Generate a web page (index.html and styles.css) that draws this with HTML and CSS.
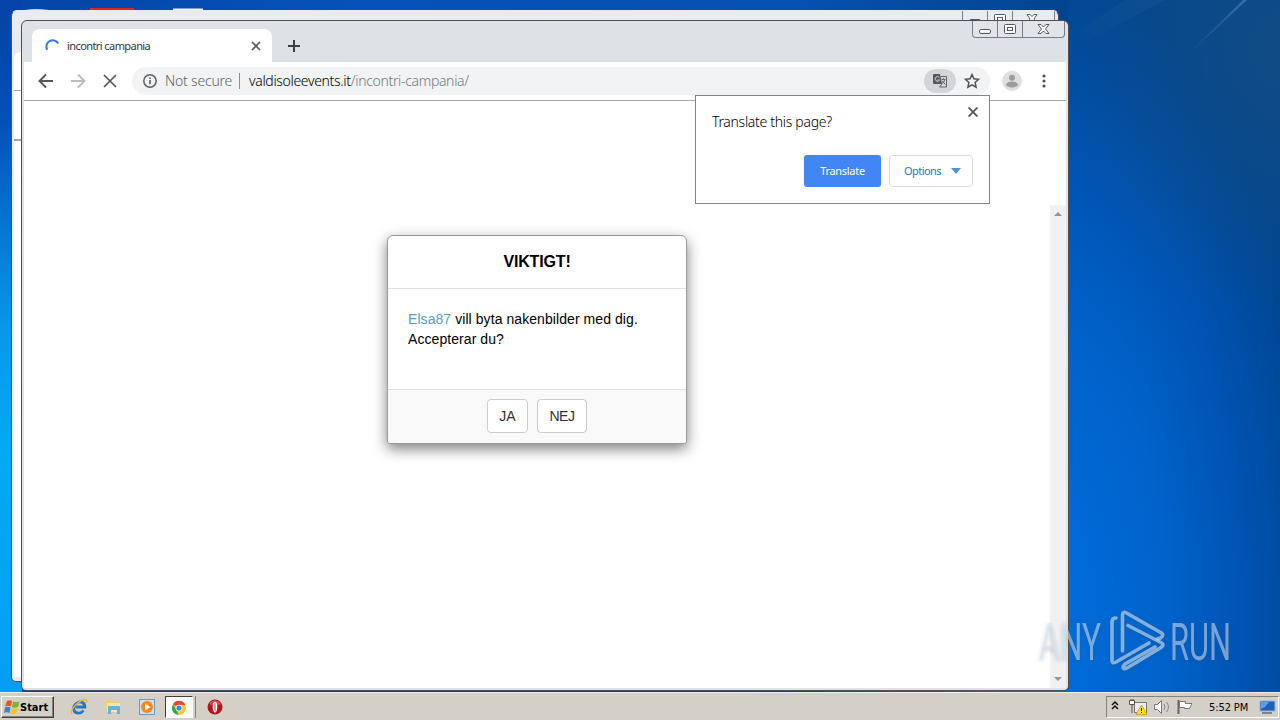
FILE: index.html
```html
<!DOCTYPE html>
<html lang="en">
<head>
<meta charset="utf-8">
<title>incontri campania</title>
<link rel="stylesheet" href="styles.css">
</head>
<body>
<div class="desktop">
  <svg class="rays" width="1280" height="692" viewBox="0 0 1280 692">
    <defs><linearGradient id="ray" x1="1" y1="0" x2="0" y2="1"><stop offset="0" stop-color="#8ac2e8" stop-opacity=".3"/><stop offset="1" stop-color="#8ac2e8" stop-opacity="0"/></linearGradient></defs>
    <path d="M1243 0h4L1180 62Z" fill="url(#ray)"/>
    <path d="M1125 0h40L1070 50V36Z" fill="url(#ray)" opacity=".2"/>
    <path d="M25 10q10-2 24 0z" fill="#cfd8df"/><path d="M90 8h44v3H90z" fill="#d52b1e"/><path d="M173 8.500h30v2.500h-30z" fill="#eef3f8"/>
  </svg>

  <div class="window back">
    <div class="controls"><i></i><i></i><i></i>
      <svg width="85" height="17" viewBox="0 0 85 17" fill="#fff" stroke="#555a66"><rect x="6.500" y="8.500" width="11" height="4" rx="1.500"/><rect x="31.500" y="3.500" width="11" height="9" rx="1"/><rect x="34.500" y="6.500" width="5" height="3"/><path d="M64 3.500h3l2 2 2-2h3l-3 4.500 3 4.500h-3l-2-2-2 2h-3l3-4.500z"/></svg>
    </div>
    <div class="back-tabs"></div>
    <div class="back-line"></div>
    <div class="back-mark"></div>
  </div>

  <div class="window front">
    <div class="controls"><i></i><i></i><i></i>
      <svg width="92" height="17" viewBox="0 0 92 17" fill="#fff" stroke="#555a66"><rect x="6.500" y="8.500" width="11" height="4" rx="1.500"/><rect x="31.500" y="3.500" width="11" height="9" rx="1"/><rect x="34.500" y="6.500" width="5" height="3"/><path d="M65 3.500h3l2.500 2.500L73 3.500h3L72.500 8l3.500 4.500h-3L70.500 10 68 12.500h-3L68.500 8z"/></svg>
    </div>
    <div class="tabstrip">
      <div class="tab">
        <svg class="spinner" width="16" height="16" viewBox="0 0 16 16"><path d="M3.200 12.800A6.300 6.300 0 0 1 14.200 6.500" fill="none" stroke="#3b78e0" stroke-width="2"/></svg>
        <span class="tab-title">incontri campania</span>
        <svg width="10" height="10" viewBox="0 0 10 10"><path d="M1 1l8 8M9 1l-8 8" stroke="#555960" stroke-width="1.700"/></svg>
      </div>
      <svg class="newtab" width="12" height="12" viewBox="0 0 12 12"><path d="M6 0v12M0 6h12" stroke="#3c4043" stroke-width="2"/></svg>
    </div>
    <div class="toolbar">
      <svg class="nav" width="96" height="16" viewBox="0 0 96 16" fill="none" stroke="#54575b" stroke-width="1.900"><path d="M15 8H2M8 1.500L1.500 8 8 14.500"/><path d="M33 8h13M40 1.500L46.500 8 40 14.500" stroke="#b9bbbe"/><path d="M66 2l12 12M78 2L66 14" stroke-width="1.700"/></svg>
      <div class="omnibox">
        <svg width="16" height="16" viewBox="0 0 16 16"><circle cx="8" cy="8" r="6.200" fill="none" stroke="#5f6368" stroke-width="1.500"/><path d="M8 7v4.300M8 4.400v1.700" stroke="#5f6368" stroke-width="1.700"/></svg>
        <span class="secure">Not secure</span><span class="divider"></span>
        <span class="url"><b>valdisoleevents.it</b>/incontri-campania/</span>
        <span class="translate-chip"><svg width="16" height="16" viewBox="0 0 16 16"><path d="M2 1h6l2 10H2a1 1 0 0 1-1-1V2a1 1 0 0 1 1-1z" fill="#55585c"/><path d="M7.300 4.500A2.300 2.300 0 1 0 7.500 7H5.500" fill="none" stroke="#d0d2d5"/><path d="M8.500 3.500h6v10.500H7.500L10 11M9.500 6.500h4M11.500 5.200v1.300M12.800 6.500q-.5 3-3 4M10.200 8l3.300 3.500" fill="none" stroke="#62656a"/></svg></span>
        <svg class="star" width="16" height="16" viewBox="0 0 16 16"><path d="M8 1.500l1.900 4.300 4.700.5-3.500 3.200 1 4.700L8 11.800l-4.100 2.400 1-4.700L1.400 6.300l4.700-.5z" fill="none" stroke="#505358" stroke-width="1.500"/></svg>
      </div>
      <svg class="avatar" width="20" height="20" viewBox="0 0 20 20"><circle cx="10" cy="10" r="10" fill="#dedfe1"/><circle cx="10" cy="6.700" r="3" fill="#9b9da0"/><ellipse cx="10" cy="13.500" rx="6" ry="3" fill="#9b9da0"/></svg>
      <svg class="more" width="4" height="16" viewBox="0 0 4 16" fill="#505358"><circle cx="2" cy="3" r="1.600"/><circle cx="2" cy="8" r="1.600"/><circle cx="2" cy="13" r="1.600"/></svg>
    </div>
    <div class="page">
      <div class="scrollbar"><svg width="8" height="4" viewBox="0 0 8 4"><path d="M0 4l4-4 4 4z" fill="#969696"/></svg><svg width="8" height="4" viewBox="0 0 8 4"><path d="M0 0l4 4 4-4z" fill="#969696"/></svg></div>
    </div>
  </div>

  <div class="dialog">
    <div class="dialog-head">VIKTIGT!</div>
    <div class="dialog-body"><span class="name">Elsa87</span> vill byta nakenbilder med dig.<br>Accepterar du?</div>
    <div class="dialog-foot"><span class="choice ja">JA</span><span class="choice nej">NEJ</span></div>
  </div>

  <div class="translate">
    <div class="translate-head"><span>Translate this page?</span><svg width="10" height="10" viewBox="0 0 10 10"><path d="M.5.500l9 9M9.500.500l-9 9" stroke="#55585c" stroke-width="1.900"/></svg></div>
    <div class="translate-actions"><span class="primary">Translate</span><span class="options">Options<svg width="10" height="6" viewBox="0 0 10 6"><path d="M0 0h10L5 6z" fill="#4f93dc"/></svg></span></div>
  </div>

  <svg class="watermark" width="220" height="72" viewBox="0 0 220 72">
    <g fill="#d4e4f5" fill-opacity=".55">
      <text x="3" y="53" textLength="62" lengthAdjust="spacingAndGlyphs">ANY</text>
      <text x="134" y="53" textLength="61" lengthAdjust="spacingAndGlyphs">RUN</text>
    </g>
    <g fill="none" stroke="#b9d5f3" stroke-opacity=".68" stroke-width="3.600" stroke-linecap="round" stroke-linejoin="round">
      <path d="M80 11q-4 0-4 4v39q0 3 4 1l33-19"/>
      <path d="M86.500 44V8q0-4 4-2l35 20q3 2-1 5l-3 1"/>
      <path d="M92 18.500l33 17q4 2 0 5L91 61q-4 2-4-1l2-3 30-17"/>
    </g>
  </svg>

  <div class="taskbar">
    <div class="start"><svg width="16" height="16" viewBox="0 0 16 16"><path d="M3 2q3-1.500 5 0L7 7.500q-3-1.500-6 0z" fill="#e25822"/><path d="M9 2.500q3 1.500 6.500 0L14 8q-3 1.500-6 0z" fill="#75b530"/><path d="M1 8.500q3-1.500 5.500 0L5.500 14q-3-1.500-5.500 0z" fill="#3387cf"/><path d="M7.500 9q3 1.500 6 0L12 14.500q-3 1.500-6 0z" fill="#f5c62b"/></svg><span>Start</span></div>
    <div class="quick">
      <svg width="18" height="18" viewBox="0 0 18 18"><path d="M14 12.500A5.600 5.600 0 1 1 14.800 9H5.500" fill="none" stroke="#2478c4" stroke-width="2.800" transform="skewX(-8) translate(1.300 0)"/><path d="M2 16C-1 13 8 2 15.500 1.500c2.500 0 1 3 0 4" fill="none" stroke="#e8b634" stroke-width="1.300"/></svg>
      <svg width="18" height="18" viewBox="0 0 18 18"><path d="M2 2h5l1 2h7v9H2z" fill="#f0cf69"/><path d="M3 5h13v9H3z" fill="#f8e7a1"/><path d="M4 16V9q0-1 1-1h10q1 0 1 1v7h-3v-4H7v4z" fill="#5fb3dc"/></svg>
      <svg width="18" height="18" viewBox="0 0 18 18"><rect x="1.500" y="1.500" width="15" height="15" fill="#c9e2f5" stroke="#5c9ed1"/><circle cx="9" cy="9" r="6" fill="#f28a1b"/><path d="M7 5.500v7L12.500 9z" fill="#fff"/></svg>
      <div class="active-task"><svg width="16" height="16" viewBox="0 0 16 16"><circle cx="8" cy="8" r="7" fill="#fbc72c"/><path d="M8 8L2 4.200A7 7 0 0 1 14.500 5H8z" fill="#df4937"/><path d="M2 4.400L6 11l1.500 4A7 7 0 0 1 2 4.400z" fill="#35a353"/><circle cx="8" cy="8" r="3.300" fill="#fff"/><circle cx="8" cy="8" r="2.600" fill="#4285e8"/></svg></div>
      <svg class="opera" width="16" height="16" viewBox="0 0 16 16"><circle cx="8" cy="8" r="7.500" fill="#b5151f"/><path d="M2 5a7 7 0 0 1 12 0Q8 8 2 5" fill="#e36166" opacity=".7"/><ellipse cx="8" cy="8" rx="2.300" ry="5.500" fill="#fff"/><ellipse cx="8" cy="8" rx=".8" ry="4.500" fill="#c88"/></svg>
    </div>
    <div class="tray">
      <svg width="82" height="18" viewBox="0 0 82 18" fill="none"><path d="M2 7l3-3 3 3M2 11l3-3 3 3" stroke="#111" stroke-width="1.500"/><rect x="24.500" y="4.500" width="12" height="10" fill="#eee" stroke="#777"/><path d="M19.500 2.500h5v4h-5zM22 7v8M21 1v2M23 1v2" stroke="#555" fill="#fff"/><path d="M31.500 7l5.500 9.500H26z" fill="#ffdb21" stroke="#b69410" stroke-width=".7"/><path d="M31.500 10v3M31.500 14v1" stroke="#222"/><path d="M44.500 6.500h3l4-4v13l-4-4h-3z" fill="#fff" stroke="#777"/><path d="M54 6q2 3 0 6M56.500 4q4 5 0 10" stroke="#888"/><path d="M68.500 2v14" stroke="#666" stroke-width="2"/><path d="M69.500 3.500h6v2h7q-2 2-3 5h-5v-1h-5z" fill="#fff" stroke="#777"/></svg>
      <span class="clock">5:52 PM</span>
      <svg class="show" width="17" height="14" viewBox="0 0 17 14"><path d="M1 1h15v10H1z" fill="#1f61b8" stroke="#8cb5df"/><path d="M2 2h8L6 7 2 9z" fill="#5f9fdf"/><path d="M3 13h10" stroke="#334"/></svg>
    </div>
  </div>
</div>
</body>
</html>
```
FILE: styles.css
```css
* { box-sizing: border-box; }
body { margin: 0; font-family: "Noto Sans", sans-serif; }
svg { display: block; flex: none; }
.desktop {
  position: relative; width: 1280px; height: 720px; overflow: hidden;
  background:
    linear-gradient(180deg, #0442a6 0, #0450b8 120px, #0573d3 220px, #0898ea 330px, #04a9f4 450px, #04a2f5 600px, #069df5 692px) 0 0 / 22px 692px no-repeat,
    linear-gradient(90deg, #0444a8, #0553b9 35%, #0550b0 75%, #02458f 100%) 0 0 / 1068px 22px no-repeat,
    radial-gradient(ellipse 240px 260px at 1285px 50px, rgba(22,78,130,.75), rgba(22,78,130,0)),
    radial-gradient(ellipse 350px 800px at 1040px 620px, #006fde 0, #0063cc 35%, #0052b0 60%, #00458f 82%, #04458c 100%);
}
.rays { position: absolute; left: 0; top: 0; }
.window { position: absolute; border: 1px solid #4b505b; border-radius: 6px 6px 5px 5px; }
.back { left: 11px; top: 10px; width: 1048px; height: 672px; background: #e9ebee; border-top-color: #e9ebee; overflow: hidden; }
.back-tabs { margin: 41px 2px 0; height: 38px; background: #fff; border-radius: 6px 0 0; }
.back-line { margin-left: 2px; height: 1px; background: #a6a8ac; }
.back-mark { margin-left: 2px; height: 586px; background: linear-gradient(#a0a3a9, #a0a3a9) 0 48px / 8px 2px no-repeat #fff; }
.front { left: 21px; top: 20px; width: 1048px; height: 671px; padding: 0 2px 2px; background: linear-gradient(90deg, #dfe1e5 60%, #e2e4e3); display: flex; flex-direction: column; }
.controls { position: absolute; right: 3px; top: 0; width: 93px; height: 17px; display: flex; border: 1px solid #777d88; border-top: 0; border-radius: 0 0 4px 4px; background: #e2e4e9; }
.back .controls { right: 3px; width: 93px; background: #e9ebee; }
.controls i { width: 25px; border-right: 1px solid #777d88; }
.controls i:last-of-type { border: 0; }
.controls svg { position: absolute; left: 0; top: 0; }
.tabstrip { height: 41px; padding: 8px 8px 0; display: flex; background: #dee1e6; border-radius: 5px 5px 0 0; }
.tab { width: 240px; height: 33px; padding: 0 11px 0 12px; display: flex; align-items: center; background: #fff; border-radius: 8px 8px 0 0; }
.spinner { margin-top: -1px; }
.tab-title { flex: 1; margin-left: 7px; font-size: 11px; letter-spacing: -.58px; color: #34373b; white-space: nowrap; }
.newtab { margin: 11px 0 0 16px; }
.toolbar { height: 39px; padding: 0 20px 1px 14px; display: flex; align-items: center; background: #fff; border-bottom: 1px solid #a9abae; }
.omnibox { width: 859px; height: 28px; padding: 0 10px; display: flex; align-items: center; border-radius: 14px; background: #f1f3f4; font-size: 14px; font-weight: 300; white-space: nowrap; }
.nav { margin-right: -2px; }
.secure { width: 67px; margin-left: 7px; color: #5f6368; letter-spacing: -.2px; }
.divider { width: 1px; height: 16px; margin: 0 9px 0 7px; background: #8c8f93; }
.url { flex: 1; color: #74787e; letter-spacing: -.33px; }
.url b { font-weight: 300; color: #000; }
.translate-chip { width: 32px; height: 24px; display: grid; place-items: center; border-radius: 12px; background: #d3d5d8; }
.star { margin: 0 0 0 8px; }
.avatar { margin-left: 12px; }
.more { margin-left: 20.500px; }
.page { flex: 1; display: flex; justify-content: flex-end; background: #fff; }
.scrollbar { width: 16px; margin-top: 104px; padding: 7px 4px 7px; display: flex; flex-direction: column; justify-content: space-between; background: #f1f1f1; }
.dialog { position: absolute; left: 387px; top: 235px; width: 300px; height: 209px; border: 1px solid #999; border-radius: 6px 6px 3px 3px; background: #fff; box-shadow: 0 5px 14px rgba(0,0,0,.5); font: 14px/20px "Liberation Sans", Arial, sans-serif; color: #000; display: flex; flex-direction: column; }
.dialog-head { height: 53px; border-bottom: 1px solid #e1e1e1; text-align: center; line-height: 51px; font-size: 16px; font-weight: 700; letter-spacing: -.15px; }
.dialog-body { flex: 1; padding: 20px; white-space: nowrap; letter-spacing: .07px; }
.name { color: #5a9bd0; }
.dialog-foot { height: 54px; padding-top: 9px; display: flex; justify-content: center; gap: 9px; border-top: 1px solid #dedede; border-radius: 0 0 3px 3px; background: #f9f9f9; }
.choice { height: 34px; border: 1px solid #ccc; border-radius: 4px; background: #fff; text-align: center; line-height: 32px; font-size: 14px; color: #333; }
.ja { width: 41px; }
.nej { width: 50px; letter-spacing: -.4px; }
.translate { position: absolute; left: 695px; top: 95px; width: 295px; height: 109px; padding: 11px 16px 16px; display: flex; flex-direction: column; justify-content: space-between; border: 1px solid #808387; background: #fff; }
.translate-head { display: flex; justify-content: space-between; font-size: 14px; font-weight: 300; line-height: 30px; color: #000; letter-spacing: -.3px; }
.translate-head svg { margin: 0 -5px 0 0; }
.translate-actions { display: flex; justify-content: flex-end; gap: 8px; font-size: 11px; line-height: 32px; }
.primary { width: 77px; height: 32px; border-radius: 3px; background: #4285f4; color: #fff; text-align: center; letter-spacing: -.3px; }
.options { width: 84px; height: 32px; padding: 0 11px 0 14px; display: flex; align-items: center; justify-content: space-between; border: 1px solid #dadce0; border-radius: 4px; color: #2b76c4; letter-spacing: -.55px; }
.watermark { position: absolute; left: 1036px; top: 607px; overflow: visible; font: 400 52px Roboto, sans-serif; filter: drop-shadow(0 1px 2px rgba(70,70,70,.4)); }
.taskbar { position: absolute; left: 0; top: 692px; width: 1280px; height: 28px; padding: 3px 0 2px; display: flex; border-top: 1px solid #eee; background: #d4d0c8; }
.start { width: 53px; height: 22px; margin-left: 1px; padding: 2px; display: flex; border: 1px solid; border-color: #fff #404040 #404040 #fff; box-shadow: inset -1px -1px #858179; font: 700 11px/17px "DejaVu Sans Condensed", "DejaVu Sans", sans-serif; color: #000; }
.quick { display: flex; align-items: center; height: 22px; margin-left: 16px; }
.quick > svg + svg { margin-left: 16px; }
.active-task { width: 28px; height: 22px; margin-left: 9px; padding: 3px 5px; border: 1px solid; border-color: #404040 #fff #fff #404040; box-shadow: 2px 0 #d4d0c8, 3px 0 #858179; background: #fff; }
.quick .opera { margin-left: 14px; }
.tray { width: 173px; height: 22px; margin: 0 1px 0 auto; padding-left: 3px; display: flex; align-items: center; border: 1px solid; border-color: #858179 #fff #fff #858179; font: 11px "DejaVu Sans Condensed", "DejaVu Sans", sans-serif; color: #000; }
.clock { width: 42px; margin-left: 17px; white-space: nowrap; letter-spacing: -.1px; }
.show { margin-left: 8px; }
```
